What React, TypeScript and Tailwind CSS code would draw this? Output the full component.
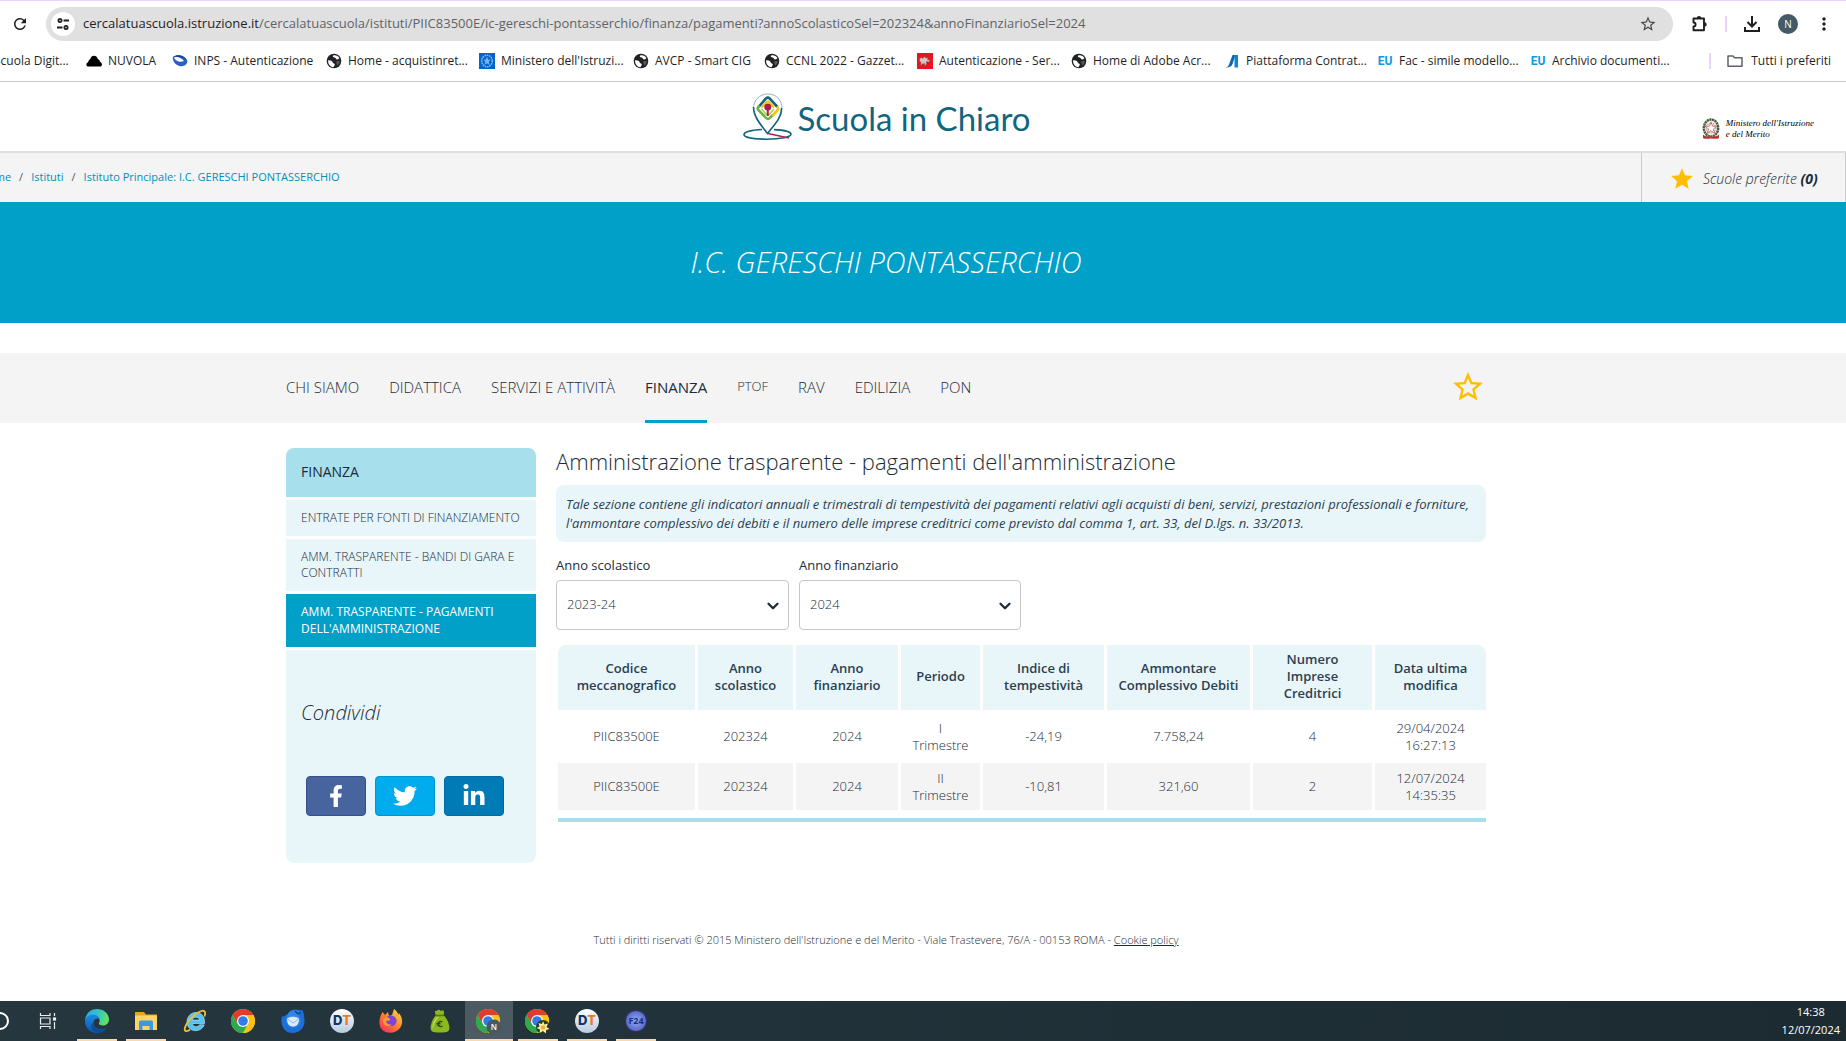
import { useState, type ReactNode } from 'react'
import { FaFacebookF, FaLinkedinIn, FaTwitter } from 'react-icons/fa'
import { MdMoreVert, MdRefresh, MdStar, MdStarBorder } from 'react-icons/md'
import { ChevronDown } from 'lucide-react'

/* ---------- browser icons ---------- */

function TuneIcon() {
  return (
    <svg viewBox="0 0 16 16" className="size-4" fill="none" stroke="#1f1f1f" strokeWidth="1.8">
      <circle cx="5" cy="4.5" r="1.6" />
      <path d="M8.500 4.500h5.500M2 11.500h5.500" />
      <circle cx="11" cy="11.5" r="1.6" />
    </svg>
  )
}

function ExtensionIcon() {
  return (
    <svg viewBox="0 0 18 18" className="size-[18px]">
      <path d="M2.500 3.500h10.500v11.800H2.500v-3.800c2.800 0 2.800-4 0-4z" fill="none" stroke="#1f1f1f" strokeWidth="1.900" strokeLinejoin="round" />
      <path d="M5.800 3.200a2.200 2.200 0 0 1 4.400 0zM13.500 7.200a2.200 2.200 0 0 1 0 4.400z" fill="#1f1f1f" />
    </svg>
  )
}

function DownloadIcon() {
  return (
    <svg viewBox="0 0 18 18" className="size-[18px]" fill="none" stroke="#1f1f1f" strokeWidth="2">
      <path d="M9 1v10M4.500 7L9 11.500L13.500 7M2 12v4h14v-4" />
    </svg>
  )
}

function GlobeIcon() {
  return (
    <svg viewBox="0 0 16 16" className="size-4 shrink-0">
      <circle cx="8" cy="8" r="7.300" fill="#202124" />
      <path d="M2 7.500c2-.5 4 .3 4.600 1.700.5 1.300 2 1 2.200 2.200.1 1-1 1.500-1.300 2.900-3-.2-5.500-3-5.500-6.800zM7 2.500c-.6 1 .2 2 1.600 2 1.200.1 1 1.600 2.300 1.900 1.200.3 2-.6 2.500-1.300C12.300 3 10 1.800 7 2.500z" fill="#fff" />
      <path d="M10 8.500l3.800-.8c0 2-1 3.800-2.500 4.900z" fill="#fff" opacity=".25" />
    </svg>
  )
}

function CloudIcon() {
  return (
    <svg viewBox="0 0 16 16" className="size-4 shrink-0">
      <path d="M1.500 13.500C0 13-.2 10 2 9.500 2.300 7.500 3.500 6.500 4.300 6 5 1.500 11 1.500 11.800 6c1.200.3 2 1.500 2.200 2.800C16.500 9.800 16.500 13 14.500 13.500z" fill="#000" />
    </svg>
  )
}

function InpsIcon() {
  return (
    <svg viewBox="0 0 16 16" className="size-4 shrink-0">
      <path d="M1 4c4-3 11-2 14 3 1.500 4-3 7-7.500 6C3 12 0 7 1 4z" fill="#2a5fcb" />
      <path d="M2 4.500c3-1.500 8 .5 10 3.500C8 10 3 8 2 4.500z" fill="#fff" />
      <path d="M1 4c4-3 11-2 14 3-3-2.500-8-4-14-3z" fill="#173f94" />
    </svg>
  )
}

function MinisteroIcon() {
  return (
    <svg viewBox="0 0 16 16" className="size-4 shrink-0">
      <rect width="16" height="16" fill="#0066cc" />
      <ellipse cx="8" cy="8" rx="5.300" ry="5.800" fill="none" stroke="#8fc0f0" strokeWidth="1.500" strokeDasharray="1.500 .8" />
      <path d="M8 3.500l1.200 3.200h2.500l-2 2 .8 3.300L8 10.200 5.500 12l.8-3.300-2-2h2.500z" fill="#7db4ec" />
    </svg>
  )
}

function PegasoIcon() {
  return (
    <svg viewBox="0 0 16 16" className="size-4 shrink-0">
      <rect width="16" height="16" fill="#e8141f" />
      <path d="M2.500 5.500l2-1 1.500 1 1-2 2 1.500 2-.5-.5 2 3 1-2 1.500-2-.5v2.500l-1.500 2.500-.5-3-2 .5-2 1.500.5-3-1.500-1.500z" fill="#d9c6c4" stroke="#6b4a4a" strokeWidth=".5" />
    </svg>
  )
}

function PiattaformaIcon() {
  return (
    <svg viewBox="0 0 16 16" className="size-4 shrink-0">
      <path d="M1 14.500c2 0 3-.8 4-3L8.500 2h3L8.500 11c-1 2.500-3.500 4-7.500 3.500z" fill="#0a66b2" />
      <path d="M10.500 2H14v12.500h-3.500z" fill="#1283cf" />
    </svg>
  )
}

function EuIcon() {
  return (
    <span className="w-4 shrink-0 font-['Roboto',sans-serif] text-xs leading-4 font-bold text-[#0b9ae5]">
      EU
    </span>
  )
}

function FolderIcon() {
  return (
    <svg viewBox="0 0 16 16" className="size-4 shrink-0" fill="none" stroke="#5f6368" strokeWidth="1.500">
      <path d="M1 13.200V3h5l1.500 1.800H15v8.400z" strokeLinejoin="round" />
    </svg>
  )
}

/* ---------- logos ---------- */

function PinLogo() {
  return (
    <svg viewBox="0 0 50 48" className="h-12 w-[50px]">
      <path d="M20 36.500C10 37 2 38.800 2 41.500 2 44.500 12 46.200 25 46.200S49 44 49 41.300C49 39 42 37 32 36.600" fill="none" stroke="#12657f" strokeWidth="1.600" />
      <path d="M26 40.500L47 45" stroke="#b3244d" strokeWidth="1.500" />
      <path d="M26 1C17 1 11.500 7.500 11.500 15.500 11.500 24 18 31 25.500 40.500 33 31 40 24 40 15.500 40 7.500 34.500 1 26 1z" fill="#fff" stroke="#8fb5c2" strokeWidth="1" />
      <path d="M11.500 14c0 9 6.500 17 14 26.500C33 31 40 24 39.500 15" fill="none" stroke="#12657f" strokeWidth="1.600" />
      <g fill="none" strokeLinejoin="round" strokeWidth="2.600">
        <path d="M16.500 14l7.300-8.300q2-2 4 0L35.500 14" stroke="#12657f" />
        <path d="M17.500 12.500l-1.500 2q-.7 1.200.3 2.400l7.700 8q2 1.800 4 0l3-3.200" stroke="#6db33f" />
        <path d="M35 13.500l.7 1q1 1.300 0 2.500l-5.500 6" stroke="#f3c316" />
        <path d="M19.500 14.500l5-5.500q1.300-1.200 2.600 0l4.900 5.500" stroke="#f3c316" strokeWidth="2" />
        <path d="M19.500 16l5 5.500q1.300 1.200 2.600 0l4.900-5.500" stroke="#a5cf52" strokeWidth="1.500" />
      </g>
      <circle cx="25.800" cy="14" r="3.500" fill="#a91f45" />
      <path d="M25.800 15v8" stroke="#a91f45" strokeWidth="2" />
    </svg>
  )
}

function RepubblicaEmblem() {
  return (
    <svg viewBox="0 0 18 22" className="h-[22px] w-[18px]">
      <ellipse cx="9" cy="10" rx="7.200" ry="8.500" fill="#f4eceb" stroke="#46603a" strokeWidth="2.400" strokeDasharray="2.200 .5" />
      <circle cx="9" cy="10" r="4.800" fill="none" stroke="#b9a3a0" strokeWidth="1.200" strokeDasharray="1.200 .8" />
      <path d="M9 4l1.500 4.200H15L11.400 11l1.300 4.300L9 12.700l-3.700 2.600L6.600 11 3 8.200h4.500z" fill="#fff" stroke="#c25a5a" strokeWidth=".8" />
      <path d="M1 16.500c2 2 4 2 8 2s6 0 8-2v3.500c-2 1.500-5 .5-8 .5s-6 1-8-.5z" fill="#c03035" />
    </svg>
  )
}

/* ---------- taskbar icons ---------- */

function TaskViewIcon() {
  return (
    <svg viewBox="0 0 18 18" className="size-[18px]" fill="none" stroke="#e8edef" strokeWidth="1.200">
      <path d="M1.500 1v2.500h9.500V1M1.500 17v-2.500h9.500V17M1.500 6h9.500v6H1.500zM15.500 1v3M15.500 10v7" />
      <rect x="14.500" y="6" width="2" height="2" fill="#fff" />
    </svg>
  )
}

function EdgeIcon() {
  return (
    <svg viewBox="0 0 24 24" className="size-6">
      <defs>
        <linearGradient id="edgeTop" x1="0" y1="0" x2="1" y2=".3">
          <stop offset="0" stopColor="#2aa7e8" />
          <stop offset=".6" stopColor="#35c6bd" />
          <stop offset="1" stopColor="#5fe06a" />
        </linearGradient>
        <linearGradient id="edgeBottom" x1="0" y1="0" x2="0" y2="1">
          <stop offset="0" stopColor="#1a8be0" />
          <stop offset="1" stopColor="#0b57b4" />
        </linearGradient>
      </defs>
      <path d="M0 11C1 4 6 0 12 0c7 0 12 5 12 10.500 0 3.500-2.500 6-6 6-3 0-4.500-1.200-4-2.500 2-3-.5-6-4-6-5 0-9 3-10 3z" fill="url(#edgeTop)" />
      <path d="M0 12c.5-4 4-6.500 8-6.500 3.500 0 6.500 2 6.800 5-1-1.500-5.300-1.500-6.300 2.500-1 5 5 9 12.500 6.500C19 22.300 15.500 24 12 24 5 24 0 18.500 0 12z" fill="url(#edgeBottom)" />
      <path d="M8 14c.3 5 6 8.500 13 5.500C18 24 12.500 24.500 9 22.500 5 20 6 14 8 14z" fill="#124a94" />
    </svg>
  )
}

function ExplorerIcon() {
  return (
    <svg viewBox="0 0 24 24" className="size-6">
      <path d="M1 3h9l2 2.500h11V21H1z" fill="#e5a521" />
      <path d="M1 6.500h22V21H1z" fill="#fdd469" />
      <path d="M5 13q0-1.500 1.500-1.500h11q1.500 0 1.500 1.500v8h-3.500v-4h-7v4H5z" fill="#3f97dd" />
    </svg>
  )
}

function InternetExplorerIcon() {
  return (
    <svg viewBox="0 0 24 24" className="size-6">
      <path d="M21.500 14.500H9.300c.3 3.500 6 4.300 7.200 1.300h4.700C18 24.500 4.200 23.500 4 13 4 7.500 8 3.500 13 3.500c6 0 9 4.700 8.500 11zM9.300 11h7.200c-.5-3.800-6.500-3.800-7.200 0z" fill="#55c3f2" stroke="#bfeaff" strokeWidth=".6" />
      <path d="M21.500 7.500c1.500-4 .5-6.500-3-5.500C12 4 3 13 1.800 19.500c-.6 3.500 2.700 3 5.200 1.300" fill="none" stroke="#f3c02b" strokeWidth="1.800" />
    </svg>
  )
}

function ChromeIcon({ children }: { children?: ReactNode }) {
  return (
    <svg viewBox="0 0 26 26" className="size-[26px]">
      <circle cx="12" cy="13" r="12" fill="#fbc116" />
      <path d="M1.600 7A12 12 0 0 1 22.400 7L12 7.500 6.800 16z" fill="#e33b2e" />
      <path d="M1.600 7A12 12 0 0 0 12 25l5.200-9-10.400 0z" fill="#2da94f" />
      <path d="M22.400 7H12v12l5.200-3L12 25A12 12 0 0 0 22.400 7z" fill="#fbc116" />
      <circle cx="12" cy="13" r="6" fill="#fff" />
      <circle cx="12" cy="13" r="4.800" fill="#2f7de9" />
      {children}
    </svg>
  )
}

function ThunderbirdIcon() {
  return (
    <svg viewBox="0 0 24 24" className="size-6">
      <path d="M1 7c-2 8 1 16.500 10.500 17C19 24 24 18 23.500 11c0-3-1-4-.5-6-1-1-.5-2-1.500-4-2 .5-3.500 0-5.500-.5C11 0 8 2 7 5 5 5 3 9 1 7z" fill="#1c6fd6" />
      <path d="M7 5c2-5 10-5 14 0-3-1-4 0-3 2 3 3 2 9-3 11C9 20 4 15 5 9z" fill="#2f86e6" />
      <path d="M6 10c2-3 10-3 12 0 0 5-2.500 7.500-6 7.500S6 15 6 10z" fill="#dcebfb" />
      <path d="M6 9.500l6 4.500 6-4.500" fill="none" stroke="#8db8e6" />
      <path d="M14 2l2.500 2.500L20 4" fill="none" stroke="#0d3f94" strokeWidth="1.500" />
    </svg>
  )
}

function DtIcon() {
  return (
    <span className="flex size-6 items-center justify-center rounded-full bg-linear-to-b from-white to-[#b7cbe0] font-['Inter',sans-serif] text-[13px] font-extrabold">
      <span className="text-[#12356f]">D</span>
      <span className="text-[#f07a1a]">T</span>
    </span>
  )
}

function FirefoxIcon() {
  return (
    <svg viewBox="0 0 24 24" className="size-6">
      <defs>
        <linearGradient id="foxBody" x1="1" y1="0" x2=".2" y2="1">
          <stop offset="0" stopColor="#ffe14a" />
          <stop offset=".5" stopColor="#ff8a2a" />
          <stop offset="1" stopColor="#f5305b" />
        </linearGradient>
      </defs>
      <path d="M2 6l1.500-3L6 6l3-3 1 4 3-1 2-6c2 1 4 4 4.500 6l.5-2c4 5 4 11 1 15-4 6-14 6.500-18.500 1C-.5 16 0 10 2 6z" fill="url(#foxBody)" />
      <path d="M8 8c3-3 9-1.500 9.500 3.500.3 4-3 6-6 5.500-4-.5-5-3.500-4-6 1 1 3 1 4-.5z" fill="#7a45d8" />
      <path d="M4 10c2-2 5-1.500 7 0-1 1.500-3 1.500-4 2 .5 3 3 4 5.500 3.500-3 3.500-9.500 1-8.500-5.500z" fill="#ff9b2f" />
    </svg>
  )
}

function MoneyBagIcon() {
  return (
    <svg viewBox="0 0 24 24" className="size-6">
      <path d="M8 6C6 3 7 1 9 2c1-2 3-1 3.500 0C15 0 17 2 15.500 6 20 10 23 19 20.500 22c-2 2-15 2-17 0C1 19 4 10 8 6z" fill="#8cb81f" />
      <path d="M9 8c-3 3-5 8-4.500 12 1.500-5 3-9 6-12z" fill="#c3df55" />
      <path d="M7.500 6.500h8.500" stroke="#55790b" strokeWidth="1.500" />
      <path d="M14.500 13c-3-1.500-5 .5-4.500 2.500s2.500 3 4.500 1.500M8.500 14.300h4M8.500 16h4" fill="none" stroke="#2f4a05" strokeWidth="1.200" />
    </svg>
  )
}

function F24Icon() {
  return (
    <span className="flex size-[22px] items-center justify-center rounded-full border border-[#32327c] bg-radial from-[#8fb0f0] to-[#4a4bb5] text-[9px] font-bold text-[#1d2c86]">
      F24
    </span>
  )
}

/* ---------- data ---------- */

const bookmarks = [
  { label: 'Scuola Digit...', icon: <GlobeIcon />, width: 'w-[114px]' },
  { label: 'NUVOLA', icon: <CloudIcon />, width: 'w-[86px]' },
  { label: 'INPS - Autenticazione', icon: <InpsIcon />, width: 'w-[154px]' },
  { label: 'Home - acquistinret...', icon: <GlobeIcon />, width: 'w-[153px]' },
  { label: "Ministero dell'Istruzi...", icon: <MinisteroIcon />, width: 'w-[154px]' },
  { label: 'AVCP - Smart CIG', icon: <GlobeIcon />, width: 'w-[131px]' },
  { label: 'CCNL 2022 - Gazzet...', icon: <GlobeIcon />, width: 'w-[153px]' },
  { label: 'Autenticazione - Ser...', icon: <PegasoIcon />, width: 'w-[154px]' },
  { label: 'Home di Adobe Acr...', icon: <GlobeIcon />, width: 'w-[153px]' },
  { label: 'Piattaforma Contrat...', icon: <PiattaformaIcon />, width: 'w-[153px]' },
  { label: 'Fac - simile modello...', icon: <EuIcon />, width: 'w-[153px]' },
  { label: 'Archivio documenti...', icon: <EuIcon />, width: 'w-[153px]' },
]

const sections = ['CHI SIAMO', 'DIDATTICA', 'SERVIZI E ATTIVITÀ', 'FINANZA', 'PTOF', 'RAV', 'EDILIZIA', 'PON']

const columns = [
  { label: 'Codice meccanografico', width: 'w-[137px]' },
  { label: 'Anno scolastico', width: 'w-[95px]' },
  { label: 'Anno finanziario', width: 'w-[102px]' },
  { label: 'Periodo', width: 'w-[79px]' },
  { label: 'Indice di tempestività', width: 'w-[121px]' },
  { label: 'Ammontare Complessivo Debiti', width: 'w-[143px]' },
  { label: 'Numero Imprese Creditrici', width: 'w-[119px]' },
  { label: 'Data ultima modifica', width: 'w-[111px]' },
]

const payments = [
  ['PIIC83500E', '202324', '2024', 'I Trimestre', '-24,19', '7.758,24', '4', '29/04/2024 16:27:13'],
  ['PIIC83500E', '202324', '2024', 'II Trimestre', '-10,81', '321,60', '2', '12/07/2024 14:35:35'],
]

const taskbarApps = [
  { name: 'Microsoft Edge', icon: <EdgeIcon />, running: true },
  { name: 'Esplora file', icon: <ExplorerIcon />, running: true },
  { name: 'Internet Explorer', icon: <InternetExplorerIcon />, running: false },
  { name: 'Google Chrome', icon: <ChromeIcon />, running: false },
  { name: 'Thunderbird', icon: <ThunderbirdIcon />, running: false },
  { name: 'DT', icon: <DtIcon />, running: false },
  { name: 'Firefox', icon: <FirefoxIcon />, running: false },
  { name: 'Contabilità', icon: <MoneyBagIcon />, running: false },
  {
    name: 'Google Chrome N',
    icon: (
      <ChromeIcon>
        <circle cx="18" cy="19" r="7.500" fill="#455a64" />
        <text x="18" y="22" textAnchor="middle" fontSize="8" fontWeight="600" fill="#fff">N</text>
      </ChromeIcon>
    ),
    running: true,
    active: true,
  },
  {
    name: 'Google Chrome profilo',
    icon: (
      <ChromeIcon>
        <circle cx="18" cy="19" r="7" fill="#2b3a1c" />
        <path d="M18 13l1.500 3.500 3.500-1-1.500 3.500 3 2-3.500 1v3.500L18 23l-3.500 2 .5-3.500-3.500-1.500 3-1.500-1-3.500 3.500 1z" fill="#f5efb4" />
        <circle cx="18" cy="19.500" r="2.300" fill="#efb51c" />
      </ChromeIcon>
    ),
    running: true,
  },
  { name: 'DT 2', icon: <DtIcon />, running: true },
  { name: 'F24', icon: <F24Icon />, running: true },
]

/* ---------- page parts ---------- */

function BrowserBar() {
  return (
    <div className="border-b border-[#c8c8c8] bg-white text-[#1f1f1f]">
      <div className="h-px bg-[#e8d4ff]" />
      <div className="flex items-center pt-1.5 pr-3 pl-[84px]">
        <button aria-label="Ricarica" className="mr-4 flex size-5 items-center justify-center">
          <MdRefresh className="size-[18px]" />
        </button>
        <div className="flex h-[34px] flex-1 items-center rounded-full bg-[#e0e0e0] pr-4 pl-[5px]">
          <button aria-label="Informazioni sul sito" className="flex size-6 items-center justify-center rounded-full bg-white">
            <TuneIcon />
          </button>
          <p className="ml-2 flex-1 text-[13px] whitespace-nowrap text-[#5f6368]">
            <span className="text-[#1f1f1f]">cercalatuascuola.istruzione.it</span>
            /cercalatuascuola/istituti/PIIC83500E/ic-gereschi-pontasserchio/finanza/pagamenti?annoScolasticoSel=202324&amp;annoFinanziarioSel=2024
          </p>
          <button aria-label="Aggiungi ai preferiti">
            <MdStarBorder className="size-[18px] text-[#474747]" />
          </button>
        </div>
        <button aria-label="Estensioni" className="ml-[18px]">
          <ExtensionIcon />
        </button>
        <span className="mx-4 h-4 w-0.5 bg-[#e8d4ff]" />
        <button aria-label="Download">
          <DownloadIcon />
        </button>
        <button className="ml-[17px] size-5 rounded-full bg-[#455a64] text-[10px] text-white">N</button>
        <button aria-label="Menu" className="ml-4">
          <MdMoreVert className="size-5" />
        </button>
      </div>
      <div className="flex h-10 items-center pr-[15px] pl-[46px] text-xs">
        {bookmarks.map((b) => (
          <button key={b.label} className={`flex shrink-0 items-center gap-1.5 whitespace-nowrap ${b.width}`}>
            {b.icon}
            {b.label}
          </button>
        ))}
        <span className="ml-auto h-4 w-0.5 bg-[#e8d4ff]" />
        <button className="ml-4 flex items-center gap-2 whitespace-nowrap">
          <FolderIcon />
          Tutti i preferiti
        </button>
      </div>
    </div>
  )
}

function SiteHeader() {
  return (
    <header>
      <div className="grid h-[71px] grid-cols-[1fr_auto_1fr] items-center border-b-2 border-[#dfdfdf] bg-white pr-8">
        <span />
        <a href="#" className="flex items-center gap-1.5 pl-8 font-['Lato',sans-serif] text-[33px] leading-none text-[#12657f]">
          <PinLogo />
          <span className="pt-1">Scuola in Chiaro</span>
        </a>
        <a href="#" className="mt-6 flex items-center gap-1.5 justify-self-end font-['Liberation_Serif',serif] text-[9px] leading-[11px] text-black italic">
          <RepubblicaEmblem />
          <span>
            Ministero dell'Istruzione
            <br />e del Merito
          </span>
        </a>
      </div>
      <div className="flex h-[49px] items-center justify-between bg-[#f4f4f4]">
        <nav aria-label="Percorso" className="flex gap-2 pl-[54px] text-[11px] text-[#0090b8]">
          <a href="#">Home</a>
          <span className="text-[#4a5a66]">/</span>
          <a href="#">Istituti</a>
          <span className="text-[#4a5a66]">/</span>
          <a href="#">Istituto Principale: I.C. GERESCHI PONTASSERCHIO</a>
        </nav>
        <a href="#" className="flex h-full w-[205px] items-center gap-2 border-x border-[#c8c8c8] pt-0.5 pl-[27px] text-sm font-light whitespace-nowrap italic">
          <MdStar className="size-[26px] text-[#ffbf00]" />
          <span>
            Scuole preferite <b className="font-bold">(0)</b>
          </span>
        </a>
      </div>
    </header>
  )
}

function SectionNav() {
  const [active, setActive] = useState('FINANZA')
  return (
    <div className="mt-[30px] bg-[#f4f4f4]">
      <div className="mx-auto flex h-[70px] max-w-[1200px] items-center justify-between">
        <nav className="flex h-full gap-[30px] text-[15px] font-light">
          {sections.map((s) => (
            <button
              key={s}
              onClick={() => setActive(s)}
              className={`border-b-[3px] pt-px ${s === 'PTOF' ? 'text-[13px]' : ''} ${
                s === active ? 'border-[#00a0c8] font-medium' : 'border-transparent'
              }`}
            >
              {s}
            </button>
          ))}
        </nav>
        <button aria-label="Aggiungi alle scuole preferite" className="mb-0.5">
          <MdStarBorder className="size-9 text-[#ffbf00]" />
        </button>
      </div>
    </div>
  )
}

function Sidebar() {
  return (
    <aside className="w-[250px] shrink-0 space-y-[3px] self-start text-xs leading-4 font-light">
      <h2 className="rounded-t-lg bg-[#a7dfec] px-[15px] pt-[15px] pb-[17px] text-sm leading-[17px] font-normal">FINANZA</h2>
      <a href="#" className="block bg-[#e8f6fa] px-[15px] py-2.5 whitespace-nowrap">
        ENTRATE PER FONTI DI FINANZIAMENTO
      </a>
      <a href="#" className="block bg-[#e8f6fa] px-[15px] py-2.5">
        AMM. TRASPARENTE - BANDI DI GARA E CONTRATTI
      </a>
      <a href="#" className="block bg-[#00a0c8] px-[15px] pt-[9px] pb-2.5 leading-[17px] font-normal text-white">
        AMM. TRASPARENTE - PAGAMENTI DELL'AMMINISTRAZIONE
      </a>
      <div className="rounded-b-lg bg-[#e8f6fa] px-[15px] pt-[49px] pb-[47px]">
        <p className="text-xl leading-7 italic">Condividi</p>
        <div className="mt-[49px] flex gap-[9px] pl-[5px] text-white">
          <a href="#" aria-label="Facebook" className="flex h-10 w-[60px] items-center justify-center rounded border border-[#35508c] bg-[#48649f]">
            <FaFacebookF className="size-[22px]" />
          </a>
          <a href="#" aria-label="Twitter" className="flex h-10 w-[60px] items-center justify-center rounded border border-[#0096d6] bg-[#00aced]">
            <FaTwitter className="size-6" />
          </a>
          <a href="#" aria-label="LinkedIn" className="flex h-10 w-[60px] items-center justify-center rounded border border-[#0069a0] bg-[#007bb6]">
            <FaLinkedinIn className="size-6" />
          </a>
        </div>
      </div>
    </aside>
  )
}

function SelectField({ id, label, options, width }: { id: string; label: string; options: string[]; width: string }) {
  return (
    <div className={width}>
      <label htmlFor={id} className="block text-[13px] leading-5">
        {label}
      </label>
      <div className="relative mt-[5px]">
        <select id={id} className="h-[50px] w-full appearance-none rounded border border-[#c5c7c9] bg-white px-2.5 text-[13px] font-light">
          {options.map((o) => (
            <option key={o}>{o}</option>
          ))}
        </select>
        <ChevronDown strokeWidth={3} className="pointer-events-none absolute top-[17px] right-[7px] size-[18px]" />
      </div>
    </div>
  )
}

function PaymentsTable() {
  return (
    <div className="mt-3">
      <div className="-mr-0.5 -ml-px">
        <table className="w-full table-fixed border-separate border-spacing-[3px] text-center text-[13px] leading-[17px]">
          <thead className="text-[#2c3e50]">
            <tr className="h-[65px]">
              {columns.map((c) => (
                <th key={c.label} className={`bg-[#e8f6fa] px-2 pb-0.5 font-semibold first:rounded-tl-lg last:rounded-tr-lg ${c.width}`}>
                  {c.label}
                </th>
              ))}
            </tr>
          </thead>
          <tbody className="font-light">
            {payments.map((row) => (
              <tr key={row[3]} className="group h-[47px]">
                {row.map((cell, i) => (
                  <td key={i} className="px-2.5 group-even:bg-[#f4f4f4]">
                    {cell}
                  </td>
                ))}
              </tr>
            ))}
          </tbody>
        </table>
      </div>
      <div className="mt-[5px] ml-0.5 h-1 bg-[#a7dfec]" />
    </div>
  )
}

function Taskbar() {
  return (
    <div className="flex h-10 shrink-0 items-center bg-linear-to-r from-[#26373f] to-[#1c2b32] pr-1.5 pl-[53px] text-white">
      <div className="flex h-full gap-[9px]">
        <button aria-label="Cerca" className="flex w-10 items-center pl-3">
          <span className="size-[18px] rounded-full border-2 border-white" />
        </button>
        <button aria-label="Visualizzazione attività" className="flex w-10 items-center justify-center">
          <TaskViewIcon />
        </button>
        {taskbarApps.map((app) => (
          <button
            key={app.name}
            aria-label={app.name}
            className={`flex w-10 items-center justify-center border-b-2 pt-0.5 ${
              app.running ? 'border-[#fbd9ae]' : 'border-transparent'
            } ${app.active ? '-mx-1 w-12 bg-[#4c5b63]' : ''}`}
          >
            {app.icon}
          </button>
        ))}
      </div>
      <p className="ml-auto text-center text-[11px] leading-[18px]">
        14:38
        <br />
        12/07/2024
      </p>
    </div>
  )
}

export default function App() {
  return (
    <div className="overflow-hidden bg-white font-['Open_Sans','Noto_Sans',sans-serif] text-[#1c2b39]">
      {/* the window hangs over the left edge of the screen */}
      <div className="-ml-[74px] flex min-h-screen flex-col">
        <BrowserBar />
        <SiteHeader />
        <div className="bg-[#00a0c8] pt-10 pb-[41px] text-center">
          <h1 className="text-[29px] leading-10 font-light text-white italic">I.C. GERESCHI PONTASSERCHIO</h1>
        </div>
        <SectionNav />
        <div className="mx-auto flex w-full max-w-[1200px] gap-5 pt-[25px]">
          <Sidebar />
          <main className="min-w-0 flex-1">
            <h2 className="pb-2.5 text-[22px] leading-[27px] font-light">Amministrazione trasparente - pagamenti dell'amministrazione</h2>
            <p className="rounded-lg bg-[#e8f6fa] px-2.5 pt-2.5 pb-[9px] text-[13px] leading-[19px] text-[#2c3e50] italic">
              Tale sezione contiene gli indicatori annuali e trimestrali di tempestività dei pagamenti relativi agli acquisti di beni, servizi, prestazioni professionali e forniture,
              l'ammontare complessivo dei debiti e il numero delle imprese creditrici come previsto dal comma 1, art. 33, del D.lgs. n. 33/2013.
            </p>
            <div className="mt-[13px] flex gap-2.5">
              <SelectField id="anno-scolastico" label="Anno scolastico" options={['2023-24', '2022-23']} width="w-[233px]" />
              <SelectField id="anno-finanziario" label="Anno finanziario" options={['2024', '2023']} width="w-[222px]" />
            </div>
            <PaymentsTable />
          </main>
        </div>
        <footer className="mt-[67px] mb-auto text-center text-[11px] leading-5 font-light">
          Tutti i diritti riservati © 2015 Ministero dell'Istruzione e del Merito - Viale Trastevere, 76/A - 00153 ROMA -{' '}
          <a href="#" className="underline">
            Cookie policy
          </a>
        </footer>
        <Taskbar />
      </div>
    </div>
  )
}
